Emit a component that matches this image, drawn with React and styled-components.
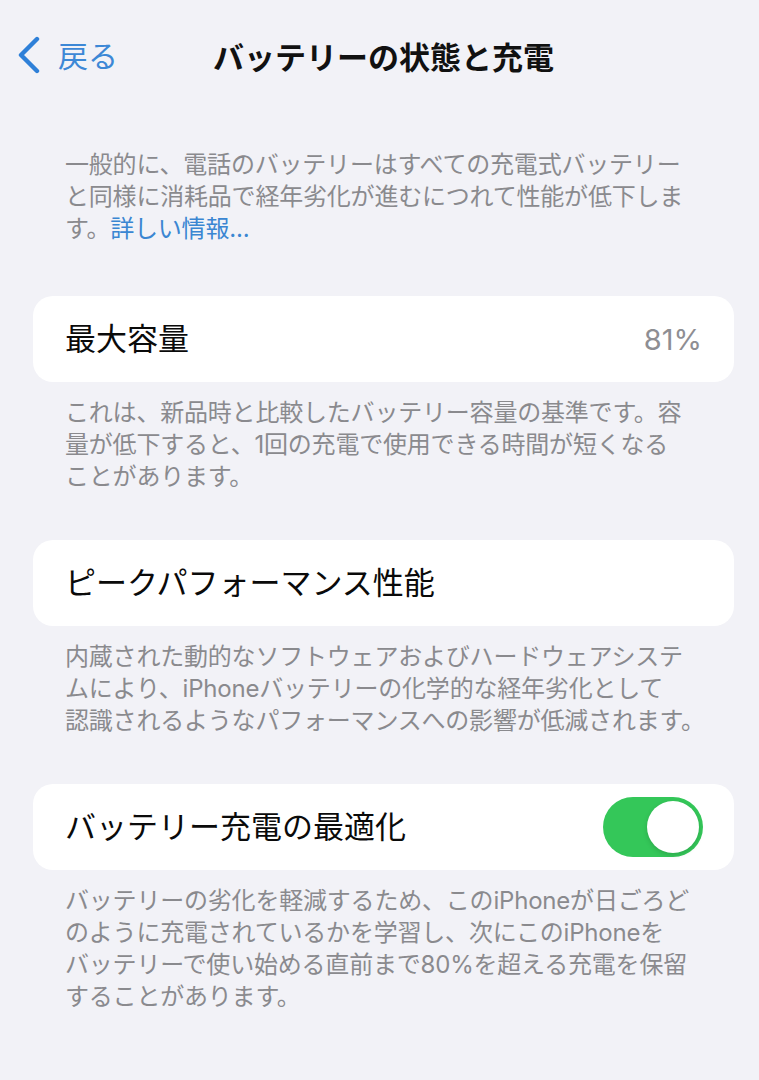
import { createGlobalStyle, styled } from "styled-components";

const GlobalStyle = createGlobalStyle`
  html, body {
    margin: 0;
    padding: 0;
    background-color: #f2f2f7;
  }
  body {
    min-height: 100vh;
    font-family: "Inter", "Noto Sans CJK JP", sans-serif;
    -webkit-font-smoothing: antialiased;
  }
`;

const sections = [
  {
    label: "最大容量",
    value: "81%",
    footer: "これは、新品時と比較したバッテリー容量の基準です。容\n量が低下すると、1回の充電で使用できる時間が短くなる\nことがあります。",
  },
  {
    label: "ピークパフォーマンス性能",
    footer: "内蔵された動的なソフトウェアおよびハードウェアシステ\nムにより、iPhoneバッテリーの化学的な経年劣化として\n認識されるようなパフォーマンスへの影響が低減されます。",
  },
  {
    label: "バッテリー充電の最適化",
    toggle: true,
    footer: "バッテリーの劣化を軽減するため、このiPhoneが日ごろど\nのように充電されているかを学習し、次にこのiPhoneを\nバッテリーで使い始める直前まで80%を超える充電を保留\nすることがあります。",
  },
];

function App() {
  return (
    <>
      <GlobalStyle />
      <Page>
        <NavBar>
          <BackButton>
            <svg width="26" height="38" viewBox="0 0 26 38" fill="none">
              <path d="M21 3 L5 19 L21 35" stroke="#2f80d8" strokeWidth="4.4" strokeLinecap="round" strokeLinejoin="round" />
            </svg>
            <span>戻る</span>
          </BackButton>
          <Title>バッテリーの状態と充電</Title>
          <div />
        </NavBar>

        <Content>
          <Intro>
            {"一般的に、電話のバッテリーはすべての充電式バッテリー\nと同様に消耗品で経年劣化が進むにつれて性能が低下しま\nす。"}
            <Link>詳しい情報...</Link>
          </Intro>

          {sections.map((s) => (
            <Section key={s.label}>
              <Card>
                <Label>{s.label}</Label>
                {s.value && <Value>{s.value}</Value>}
                {s.toggle && (
                  <Toggle $on>
                    <Knob />
                  </Toggle>
                )}
              </Card>
              <Footer>{s.footer}</Footer>
            </Section>
          ))}
        </Content>
      </Page>
    </>
  );
}

const Page = styled.div`
  display: flex;
  flex-direction: column;
  min-height: 1080px;
`;

const NavBar = styled.div`
  height: 110px;
  display: grid;
  grid-template-columns: 1fr auto 1fr;
  align-items: center;
  padding: 0 16px;
`;

const BackButton = styled.div`
  display: flex;
  align-items: center;
  gap: 16px;
  color: #3d88d6;
  font-size: 30px;
  line-height: 1;

  > span {
    font-family: "Noto Sans CJK JP", sans-serif;
    margin-top: -2px;
  }
`;

const Title = styled.div`
  font-family: "Noto Sans CJK JP", sans-serif;
  font-size: 31px;
  font-weight: 700;
  color: #111;
  line-height: 1;
  margin-left: 8px;
`;

const Content = styled.div`
  display: flex;
  flex-direction: column;
  padding: 39px 25px 0 33px;
`;

const Intro = styled.div`
  padding: 0 0 51px 32px;
  font-size: 24px;
  letter-spacing: -0.2px;
  line-height: 32px;
  color: #8a8a8e;
  white-space: pre;
`;

const Link = styled.span`
  color: #3a86d2;
`;

const Section = styled.div`
  display: flex;
  flex-direction: column;
  margin-bottom: 47px;
`;

const Card = styled.div`
  height: 86px;
  box-sizing: border-box;
  background-color: #ffffff;
  border-radius: 20px;
  display: flex;
  align-items: center;
  justify-content: space-between;
  padding: 0 31px 0 32px;
`;

const Label = styled.div`
  font-size: 31px;
  line-height: 1;
  color: #0a0a0a;
  margin-top: -2px;
`;

const Value = styled.div`
  font-size: 29px;
  line-height: 1;
  color: #8e8e93;
  margin-right: 1px;
`;

const Toggle = styled.div`
  width: 100px;
  height: 60px;
  border-radius: 30px;
  background-color: ${(p) => (p.$on ? "#34c759" : "#e5e5ea")};
  display: flex;
  align-items: center;
  justify-content: ${(p) => (p.$on ? "flex-end" : "flex-start")};
  padding: 0 4px;
  box-sizing: border-box;
`;

const Knob = styled.div`
  width: 52px;
  height: 52px;
  border-radius: 50%;
  background-color: #ffffff;
  box-shadow: 0 2px 5px rgba(0, 0, 0, 0.15);
`;

const Footer = styled.div`
  padding: 15px 0 0 32px;
  font-size: 24px;
  letter-spacing: -0.2px;
  line-height: 32px;
  color: #8a8a8e;
  white-space: pre;
`;

export default App;
